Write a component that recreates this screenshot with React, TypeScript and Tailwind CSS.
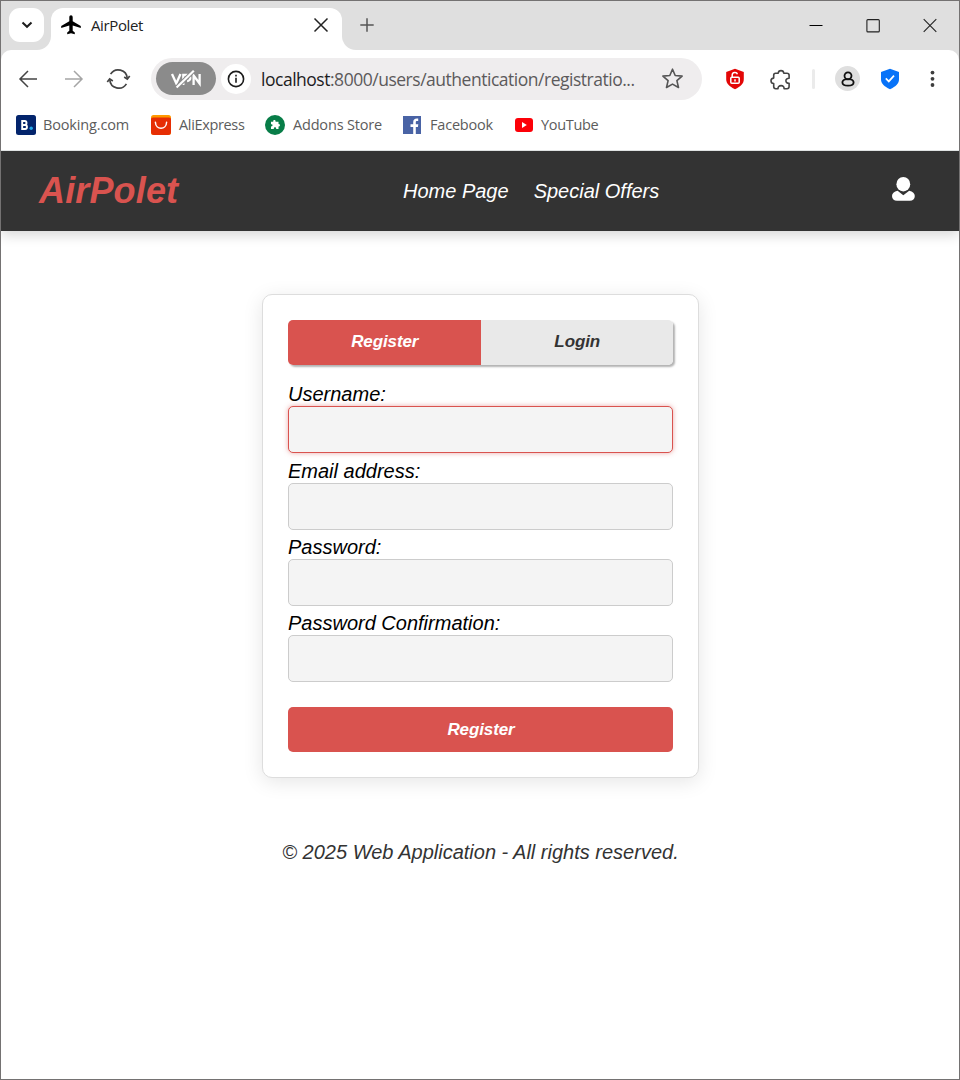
import React from "react";

const strip = "bg-[#dfdfdf]";

function Plane() {
  return (
    <svg width="22" height="20" viewBox="0 0 22 20" fill="#000">
      <path d="M9.3 6.3V2.2C9.3 1 10 .2 11 .2s1.700.8 1.700 2v4.100l8.100 4.600v2.200l-8.100-2.500v5.100l2.100 1.700v1.900L11 18.200l-3.800 1.100v-1.900l2.100-1.700v-5.100l-8.100 2.500v-2.200z" />
    </svg>
  );
}

function TabStrip() {
  return (
    <div className="flex h-[49px] shrink-0 bg-white">
      <div className={`${strip} h-full w-[50px] rounded-br-[14px] pl-2 pt-[7px]`}>
        <div className="flex h-[34px] w-[35px] items-center justify-center rounded-[11px] bg-white">
          <svg width="12" height="8" viewBox="0 0 12 8" fill="none" stroke="#1d1d1d" strokeWidth="2">
            <path d="m1.500 1.500 4.500 4.300 4.500-4.300" />
          </svg>
        </div>
      </div>
      <div className={`${strip} h-full w-[290.500px] pt-[6.500px]`}>
        <div className="flex h-full items-start rounded-t-[12px] bg-white pl-[9px] pr-[13px] pt-[7px]">
          <Plane />
          <span className="ml-[9px] mt-[-1px] text-[15px] leading-[22px] tracking-[-0.38px] text-[#222]">AirPolet</span>
          <svg className="ml-auto mt-[2.500px]" width="16" height="16" viewBox="0 0 16 16" stroke="#222" strokeWidth="1.500">
            <path d="m1.500 1.500 13 13m0-13-13 13" />
          </svg>
        </div>
      </div>
      <div className={`${strip} flex h-full flex-1 items-start rounded-bl-[14px] pl-[18.500px] pr-[22px] pt-[16px]`}>
        <svg className="mt-[1px]" width="14" height="14" viewBox="0 0 14 14" stroke="#555" strokeWidth="1.500">
          <path d="M7 .3v13.400M.3 7h13.400" />
        </svg>
        <div className="ml-auto flex gap-[43px]">
          <svg width="14" height="16" viewBox="0 0 14 16" stroke="#000" strokeWidth="1">
            <path d="M.5 8.500h13" />
          </svg>
          <svg width="14" height="16" viewBox="0 0 14 16" fill="none" stroke="#222" strokeWidth="1.100">
            <rect x=".9" y="2.600" width="12.400" height="12.300" rx="1" />
          </svg>
          <svg width="14" height="16" viewBox="0 0 14 16" stroke="#222" strokeWidth="1.100">
            <path d="m.7 2.200 12.600 12.600m0-12.600L.7 14.800" />
          </svg>
        </div>
      </div>
    </div>
  );
}

function AddressBar() {
  return (
    <div className="ml-[20px] flex h-[42px] w-[551px] items-center rounded-full bg-[#efedee] pl-[5px]">
      <div className="flex h-[33px] w-[60px] items-center justify-center rounded-full bg-[#8b8b8b]">
        <svg width="34" height="22" viewBox="0 0 34 22" fill="none" stroke="#fff" strokeWidth="2.300">
          <path d="m3 6 4.300 9.500L11.500 6M14.300 17V7h3.500c4.600 0 4.600 6 .3 6M24.600 17V7.500l6 8V6" />
          <path d="M7.600 19.500 24.800 2.700" stroke="#8b8b8b" strokeWidth="4.200" />
          <path d="M7.600 19.500 24.800 2.700" strokeWidth="2.200" />
        </svg>
      </div>
      <div className="ml-[5px] flex size-[30px] items-center justify-center rounded-full bg-white">
        <svg width="18" height="18" viewBox="0 0 18 18" fill="none" stroke="#1c1c1c" strokeWidth="1.600">
          <circle cx="9" cy="9" r="7.600" />
          <path d="M9 7.800v5M9 4.800v1.700" />
        </svg>
      </div>
      <span className="ml-[10px] w-[390px] whitespace-nowrap text-[17.500px] leading-[26px] tracking-[-0.48px] text-[#5c5a5b]">
        <span className="text-[#1d1c1d]">localhost</span>:8000/users/authentication/registratio...
      </span>
      <svg className="ml-[10px] mt-[1px]" width="23" height="22" viewBox="0 0 22 22" fill="none" stroke="#555" strokeWidth="1.600" strokeLinejoin="round">
        <path d="m11 1.200 2.700 6.300 6.900.6-5.200 4.500 1.600 6.900L11 16.100l-6 3.400 1.600-6.900-5.200-4.500 6.900-.6z" />
      </svg>
    </div>
  );
}

function Toolbar() {
  return (
    <div className={`${strip} shrink-0`}>
      <div className="flex h-[57px] items-center rounded-t-[10px] bg-white pl-[17px]">
        <svg width="20" height="18" viewBox="0 0 20 18" fill="none" stroke="#444" strokeWidth="1.500">
          <path d="M19 9H2M10 1 2 9l8 8" />
        </svg>
        <svg className="ml-[26px]" width="20" height="18" viewBox="0 0 20 18" fill="none" stroke="#a5a5a5" strokeWidth="1.500">
          <path d="M1 9h17M10 1l8 8-8 8" />
        </svg>
        <svg className="ml-[22px]" width="25" height="22" viewBox="0 0 25 22" fill="none" stroke="#444" strokeWidth="1.700">
          <path d="M4.600 6.100a9 9 0 0 1 16.600 4.200M20.400 15.900A9 9 0 0 1 3.800 11.700" />
          <path d="m18.200 9 3.100 2.200L23.700 8M1.300 14l2.400-3.200L6.800 13" />
        </svg>
        <AddressBar />
        <svg className="ml-[23px]" width="20" height="22" viewBox="0 0 20 22" fill="none">
          <path d="M10 .8 18.800 4v7.100c0 4.600-3 7.500-8.800 10.200-5.800-2.700-8.800-5.600-8.800-10.200V4z" fill="#e30606" />
          <rect x="5.800" y="9.300" width="8.400" height="5.900" rx="1" stroke="#fff" strokeWidth="1.500" />
          <path d="M7.200 9.300V7c0-3 4.500-3.400 5.200-.7M10 11.200v2.200" stroke="#fff" strokeWidth="1.500" />
        </svg>
        <svg className="ml-[25px] mt-[2px]" width="21" height="22" viewBox="0 0 21 22" fill="none" stroke="#444" strokeWidth="1.600" strokeLinejoin="round">
          <path d="M5.600 4.300h2.600c.1-1.200.2-2.700 2.800-2.700s2.700 1.500 2.800 2.700h3.100q2.200 0 2.200 2v3c-1.700-.1-3.200.7-3.200 2.500s1.500 2.600 3.200 2.500v3.300q0 2.100-2.100 2.100h-2.900c.1-1.600-.9-3.100-3-3.100s-3.200 1.500-3.100 3.100H5.700q-2 0-2-2.100v-3.100C2.400 14.500 1 13.600 1 11.800s1.400-2.700 2.700-2.700V6.300q0-2 1.900-2z" />
        </svg>
        <div className="ml-[21px] h-[20px] w-[3px] rounded bg-[#ebebeb]" />
        <div className="ml-[20px] flex size-[25px] items-center justify-center rounded-full bg-[#dfdfdf]">
          <svg width="14" height="16" viewBox="0 0 14 16" fill="none" stroke="#111" strokeWidth="1.800">
            <circle cx="7" cy="4.800" r="3.500" />
            <path d="M4 8.500C2.200 9 1.400 10.100 1.400 11.500c0 2.100 2 3.200 5.600 3.200s5.600-1.100 5.600-3.200c0-1.400-.8-2.500-2.600-3-1.900-.6-4.100-.6-6 0z" />
          </svg>
        </div>
        <svg className="ml-[20px]" width="20" height="22" viewBox="0 0 20 22" fill="none">
          <path d="M10 .8 19 4v7.100c0 4.600-3 7.500-9 10.200-6-2.700-9-5.600-9-10.200V4z" fill="#0873f8" />
          <path d="m5.800 10.400 3 3 5.200-5.800" stroke="#fff" strokeWidth="1.700" />
        </svg>
        <svg className="ml-[30px]" width="5" height="18" viewBox="0 0 5 18" fill="#3e3e3e">
          <circle cx="2.500" cy="2.600" r="1.900" />
          <circle cx="2.500" cy="8.800" r="1.900" />
          <circle cx="2.500" cy="15" r="1.900" />
        </svg>
      </div>
    </div>
  );
}

const bookmarkText = "whitespace-nowrap text-[14.500px] leading-[20px] text-[#5c5c5c]";

function Bookmarks() {
  return (
    <div className="flex h-[44px] shrink-0 items-start border-b border-[#dfe2e2] bg-white pl-[15px] pt-[8px]">
      <div className="flex w-[135px] items-center">
        <svg width="20" height="20" viewBox="0 0 20 20">
          <rect width="20" height="20" rx="2.500" fill="#03246c" />
          <path d="M6.200 6v8h2.900c2.500 0 2.500-4 0-4H6.200h2.500c2.400 0 2.400-4 0-4z" fill="none" stroke="#fff" strokeWidth="1.900" />
          <circle cx="15.200" cy="13.200" r="1.700" fill="#22a7e8" />
        </svg>
        <span className={`${bookmarkText} ml-[7px] tracking-[-0.15px]`}>Booking.com</span>
      </div>
      <div className="flex w-[114px] items-center">
        <svg width="20" height="20" viewBox="0 0 20 20">
          <rect width="20" height="20" rx="2.500" fill="#ff9900" />
          <path d="M0 4q0-1.500 2-1.500h16q2 0 2 1.500v13q0 3-3 3H3q-3 0-3-3z" fill="#e62e04" />
          <path d="M4.400 7.300c.4 8 10.800 8 11.200 0" fill="none" stroke="#fff" strokeWidth="1.500" strokeLinecap="round" />
        </svg>
        <span className={`${bookmarkText} ml-2 tracking-[-0.34px]`}>AliExpress</span>
      </div>
      <div className="flex w-[137px] items-center">
        <svg width="20" height="20" viewBox="0 0 20 20">
          <circle cx="10" cy="10" r="10" fill="#087d48" />
          <path d="M6 6.800h2.300c-.8-2.300 3-2.300 2.200 0h3v2.400c2-.8 2 3.100 0 2.300V14h-2.400c.8-2.200-3-2.200-2.200 0H6v-2.700c2.100.7 2.100-2.700 0-2z" fill="#fff" />
        </svg>
        <span className={`${bookmarkText} ml-2 tracking-[-0.18px]`}>Addons Store</span>
      </div>
      <div className="flex w-[112px] items-center">
        <svg className="ml-[1px]" width="18" height="18" viewBox="0 0 18 18">
          <rect width="18" height="18" fill="#4963a5" />
          <path d="M10.200 18v-7H7.500V8.300h2.700V6.200c0-2.800 1.700-4 5-3.600v2.500c-2.200-.1-2.400.2-2.400 1.300v1.900h2.500l-.4 2.700h-2.100v7z" fill="#fff" />
        </svg>
        <span className={`${bookmarkText} ml-[9px] tracking-[-0.2px]`}>Facebook</span>
      </div>
      <div className="flex items-center">
        <svg className="ml-[1px]" width="18" height="14" viewBox="0 0 18 14">
          <rect width="18" height="14" rx="3" fill="#fc0008" />
          <path d="m7 4 4.800 3L7 10z" fill="#fff" />
        </svg>
        <span className={`${bookmarkText} ml-2 tracking-[-0.33px]`}>YouTube</span>
      </div>
    </div>
  );
}

function Field({ label, focused = false, className = "" }: { label: string; focused?: boolean; className?: string }) {
  return (
    <label className={`block ${className}`}>
      <span className="block h-[23px] text-[20px] leading-[23px] text-black">{label}</span>
      <input
        className={`block h-[47px] w-full rounded-[5px] border bg-[#f4f4f4] outline-none ${
          focused ? "border-[#d9534f] shadow-[0_0_5px_rgba(217,83,79,0.5)]" : "border-[#ccc]"
        }`}
      />
    </label>
  );
}

export default function App() {
  return (
    <div className="flex h-[1080px] w-[960px] flex-col overflow-hidden border border-[#747272] bg-white font-['Open_Sans','Noto_Sans',sans-serif]">
      <TabStrip />
      <Toolbar />
      <Bookmarks />
      <div className="flex min-h-0 flex-1 flex-col overflow-hidden font-['Liberation_Sans',Arial,sans-serif] italic">
        <header className="flex h-[80px] shrink-0 items-center bg-[#333] pl-[38px] pr-[43px] shadow-[0_4px_12px_rgba(0,0,0,0.16)]">
          <div className="w-[364px] text-[36px] font-bold leading-[40px] tracking-[0.15px] text-[#d9534f]">AirPolet</div>
          <nav className="flex gap-[25px] text-[20px] leading-[24px] text-white">
            <a>Home Page</a>
            <a>Special Offers</a>
          </nav>
          <svg className="mb-[5px] ml-auto" width="25" height="26" viewBox="0 0 25 26" fill="#fff">
            <ellipse cx="12.300" cy="8.200" rx="6.900" ry="7.200" />
            <path d="M6.600 14.700 12.300 19.200l5.900-4.500c3.600.6 5.600 2.700 5.600 5.300 0 3-2 4.800-5 4.800H6c-3 0-5-1.800-5-4.800 0-2.600 2-4.700 5.600-5.300z" />
          </svg>
        </header>
        <main className="mt-[63px] flex flex-col items-center pl-px">
          <form className="h-[484px] w-[437px] rounded-[10px] border border-[#ddd] bg-white px-[25px] pt-[25px] shadow-[0_4px_20px_rgba(0,0,0,0.1)]">
            <div className="flex h-[45px] overflow-hidden rounded-[5px] text-[17px] font-bold leading-[43px] shadow-[2px_2px_2px_rgba(0,0,0,0.3)]">
              <button type="button" className="w-1/2 bg-[#d9534f] pb-[2px] pl-px italic tracking-[-0.1px] text-white">Register</button>
              <button type="button" className="w-1/2 bg-[#e9e9e9] pb-[2px] pl-px italic tracking-[-0.1px] text-[#333]">Login</button>
            </div>
            <Field label="Username:" focused className="mt-[18px]" />
            <Field label="Email address:" className="mt-[7px]" />
            <Field label="Password:" className="mt-[6px]" />
            <Field label="Password Confirmation:" className="mt-[6px]" />
            <button type="button" className="mt-[25px] block h-[45px] w-full rounded-[5px] bg-[#d9534f] pl-px text-[17px] font-bold italic tracking-[-0.1px] text-white">
              Register
            </button>
          </form>
          <footer className="mt-[62px] text-[20px] leading-[24px] text-[#333]">© 2025 Web Application - All rights reserved.</footer>
        </main>
      </div>
    </div>
  );
}
